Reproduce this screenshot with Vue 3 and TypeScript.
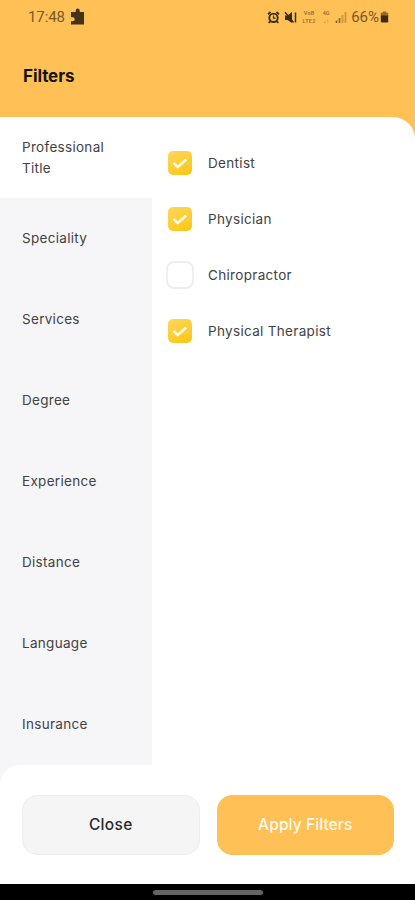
<script setup lang="ts">
import { ref } from 'vue'

interface Option {
  label: string
  checked: boolean
}

const categories: string[] = [
  'Professional Title',
  'Speciality',
  'Services',
  'Degree',
  'Experience',
  'Distance',
  'Language',
  'Insurance',
]
const active = ref<string>('Professional Title')
const options = ref<Option[]>([
  { label: 'Dentist', checked: true },
  { label: 'Physician', checked: true },
  { label: 'Chiropractor', checked: false },
  { label: 'Physical Therapist', checked: true },
])
</script>

<template>
  <div class="screen">
    <header class="header">
      <div class="status">
        <div class="status-left">
          <span class="time">17:48</span>
          <svg class="puzzle" width="15" height="18" viewBox="0 0 15 18">
            <path d="M1 4h4.700V2.600a2 2 0 0 1 4 0V4H14v12.500H1v-3.300h1.700a2 2 0 0 0 0-4H1z" />
          </svg>
        </div>
        <div class="status-right">
          <svg class="alarm" width="13" height="13" viewBox="0 0 13 13">
            <path d="M1 3.2 3.6 1M12 3.2 9.4 1M3 10.4 1.8 12M10 10.4l1.2 1.6" stroke-width="1.8" />
            <circle cx="6.5" cy="6.8" r="4.2" stroke-width="1.9" />
            <path d="M6.5 4.6v2.5h2" stroke-width="1.2" />
          </svg>
          <svg class="mute" width="13" height="13" viewBox="0 0 13 13">
            <path class="solid" d="M1 4.500h2.500L8 1v11L3.500 9H1z" />
            <path d="M1 1.200 9.500 11.500M11.500 1.500v10" stroke-width="1.5" />
          </svg>
          <span class="tiny volte"><span>VoB</span><span>LTE2</span></span>
          <span class="tiny net"><span>4G</span><span>↓↑</span></span>
          <svg class="signal" width="12" height="13" viewBox="0 0 12 13">
            <path d="M1.500 9.500V12M4.500 7V12" stroke-width="1.7" />
            <path class="weak" d="M7.500 4V12M10.500 1V12" stroke-width="1.7" />
          </svg>
          <span class="percent">66%</span>
          <svg class="battery" width="9" height="12" viewBox="0 0 9 13">
            <path class="cap" d="M2.700.5h3.600V2H8.500v4H.5V2h2.200z" />
            <path class="fill" d="M.5 5h8v6.200q0 1.300-1.300 1.300H1.800Q.5 12.500.5 11.200z" />
          </svg>
        </div>
      </div>
      <h1 class="title">Filters</h1>
    </header>

    <main class="body">
      <nav class="sidebar">
        <button
          v-for="c in categories"
          :key="c"
          type="button"
          class="category"
          :class="{ active: c === active }"
          @click="active = c"
        >
          <span class="category-label">{{ c }}</span>
        </button>
      </nav>
      <section class="options">
        <label v-for="o in options" :key="o.label" class="option">
          <input v-model="o.checked" class="native" type="checkbox" />
          <span class="box" :class="{ checked: o.checked }">
            <svg v-if="o.checked" width="24" height="24" viewBox="0 0 24 24">
              <path d="m5.500 12 4.300 3.900 8.400-7.400" />
            </svg>
          </span>
          <span class="option-label">{{ o.label }}</span>
        </label>
      </section>
    </main>

    <div class="footer-wrap">
      <footer class="footer">
        <button type="button" class="btn close">Close</button>
        <button type="button" class="btn apply">Apply Filters</button>
      </footer>
    </div>
    <div class="navbar"><span class="handle"></span></div>
  </div>
</template>

<style>
body {
  margin: 0;
  background: #fff;
}
</style>

<style scoped>
.screen {
  width: 415px;
  height: 900px;
  display: flex;
  flex-direction: column;
  overflow: hidden;
  background: #ffc155;
  font-family: Inter, 'Liberation Sans', sans-serif;
  color: #424244;
}
.header {
  height: 116.500px;
  flex: none;
}
.status {
  height: 34px;
  display: flex;
  justify-content: space-between;
  align-items: center;
  padding: 0 26px 0 28px;
  font-family: Roboto, sans-serif;
  color: #79592a;
}
.status-left,
.status-right {
  display: flex;
  align-items: center;
}
.time {
  font-size: 15px;
  line-height: 18px;
  letter-spacing: -0.1px;
}
.puzzle {
  margin-left: 5px;
  fill: #443216;
}
.alarm,
.mute,
.signal {
  fill: none;
  stroke: #3b2c16;
}
.mute {
  margin-left: 4px;
}
.mute .solid {
  fill: #3b2c16;
  stroke: none;
}
.tiny {
  display: flex;
  flex-direction: column;
  gap: 1px;
  font-size: 5.500px;
  line-height: 7px;
  font-weight: 600;
  color: #98713a;
}
.volte {
  width: 16px;
  margin-left: 4px;
  align-items: center;
  letter-spacing: 0.3px;
}
.net {
  width: 10px;
  margin-left: 4px;
  align-items: center;
}
.signal {
  margin-left: 4px;
  stroke: #8c6932;
}
.signal .weak {
  stroke: #c79544;
}
.percent {
  margin-left: 4px;
  font-size: 15px;
  line-height: 18px;
}
.battery {
  margin-left: 1px;
}
.battery .cap {
  fill: #8f6b32;
}
.battery .fill {
  fill: #3b2c16;
}
.title {
  margin: 29px 0 0 23px;
  font-size: 17px;
  line-height: 26px;
  font-weight: 700;
  letter-spacing: -0.1px;
  color: #15120d;
}
.body {
  height: 648.500px;
  flex: none;
  display: flex;
  overflow: hidden;
  background: #fff;
  border-top-right-radius: 22px;
}
.sidebar {
  width: 152px;
  display: flex;
  flex-direction: column;
  background: #f6f6f8;
}
.category {
  flex: 1;
  display: flex;
  align-items: center;
  border: 0;
  margin: 0;
  padding: 1px 40px 0 22px;
  background: transparent;
  font: inherit;
  font-size: 13.500px;
  line-height: 21px;
  letter-spacing: 0.3px;
  text-align: left;
  color: inherit;
}
.category.active {
  background: #fff;
}
.options {
  padding: 18px 0 0 14px;
}
.option {
  height: 56.200px;
  display: flex;
  align-items: center;
}
.native {
  appearance: none;
  width: 0;
  height: 0;
  margin: 0;
}
.box {
  box-sizing: border-box;
  width: 28px;
  height: 28px;
  border: 2px solid #efeff0;
  border-radius: 8px;
  background: #fff;
}
.box.checked {
  width: 24px;
  height: 24px;
  margin: 2px;
  border: 0;
  border-radius: 5px;
  background: linear-gradient(150deg, #ffd65c, #fac713);
}
.box svg {
  display: block;
  fill: none;
  stroke: #fffbe8;
  stroke-width: 2.600;
}
.option-label {
  margin-left: 14px;
  font-size: 13.500px;
  line-height: 20px;
  letter-spacing: 0.320px;
}
.footer-wrap {
  height: 119px;
  flex: none;
  background: #f6f6f8;
}
.footer {
  box-sizing: border-box;
  height: 119px;
  display: flex;
  gap: 17px;
  padding: 30px 21px 29px 22px;
  background: #fff;
  border-top-left-radius: 20px;
}
.btn {
  box-sizing: border-box;
  flex: 1 1 0;
  width: 0;
  padding: 0;
  border: 1px solid #ffc155;
  border-radius: 15px;
  font-family: inherit;
  font-size: 15.500px;
  font-weight: 500;
  line-height: 22px;
}
.close {
  background: #f5f5f5;
  border-color: #ededed;
  color: #29292b;
  letter-spacing: 0.3px;
}
.apply {
  background: #ffc155;
  color: #fffaf0;
  letter-spacing: 0.1px;
}
.navbar {
  flex: 1;
  display: flex;
  justify-content: center;
  align-items: center;
  background: #000;
}
.handle {
  width: 110px;
  height: 5px;
  border-radius: 3px;
  background: #656565;
}
</style>
